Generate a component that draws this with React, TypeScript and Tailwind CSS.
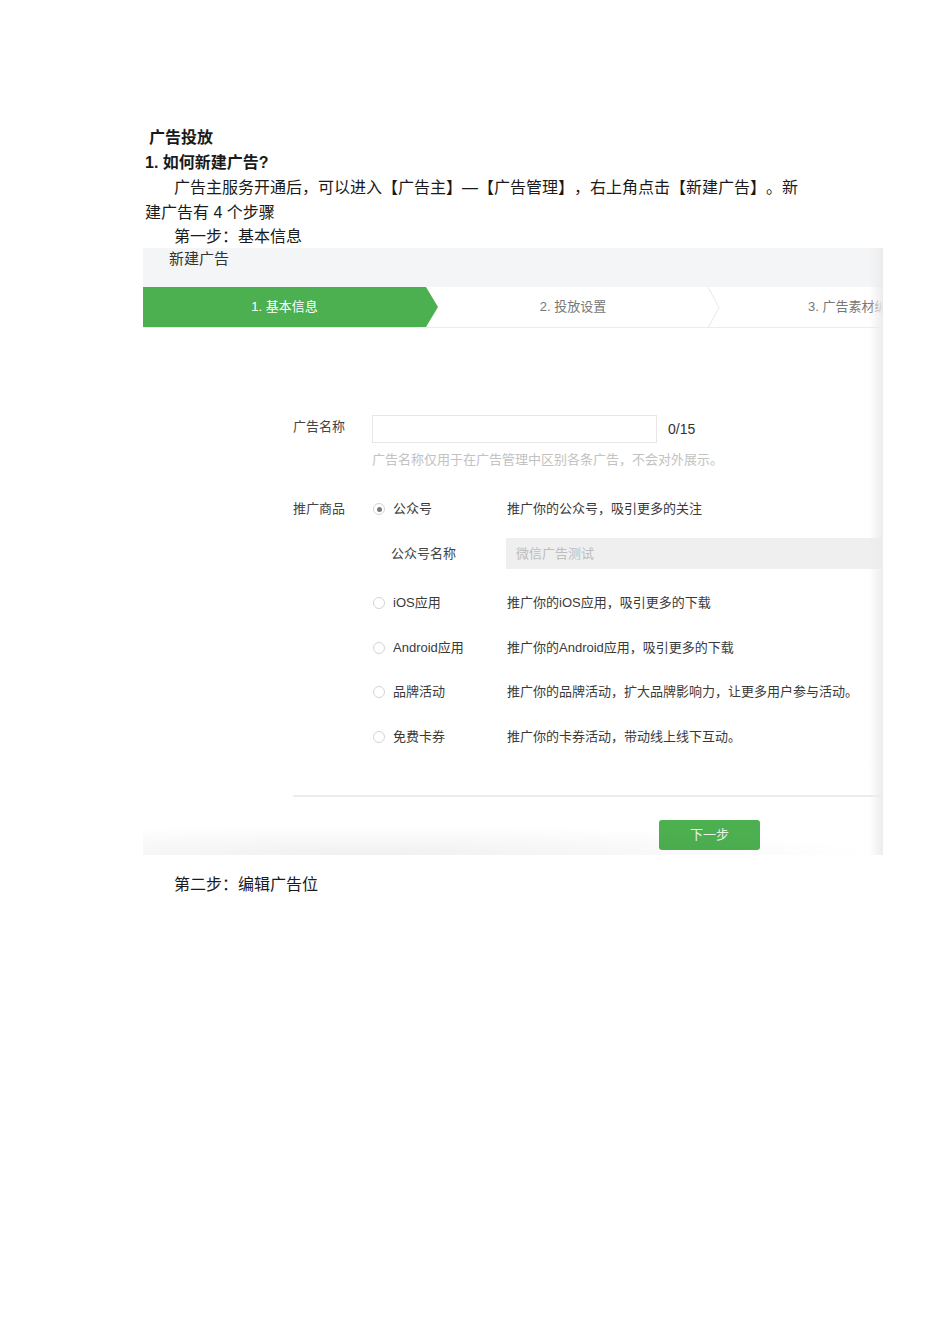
import React from "react";

const docFont = { fontFamily: '"Liberation Sans", "Noto Sans CJK SC", sans-serif' };

type Option = {
  label: string;
  desc: string;
  checked?: boolean;
};

const options: Option[] = [
  { label: "iOS应用", desc: "推广你的iOS应用，吸引更多的下载" },
  { label: "Android应用", desc: "推广你的Android应用，吸引更多的下载" },
  { label: "品牌活动", desc: "推广你的品牌活动，扩大品牌影响力，让更多用户参与活动。" },
  { label: "免费卡券", desc: "推广你的卡券活动，带动线上线下互动。" },
];

const Radio = ({ checked }: { checked?: boolean }) => (
  <span className="ml-[1px] flex h-[12px] w-[12px] shrink-0 items-center justify-center rounded-full border border-[#d4d4d4] bg-white">
    {checked && <span className="h-[5px] w-[5px] rounded-full bg-[#7a7a7a]" />}
  </span>
);

const OptionRow = ({ label, desc, checked, className }: Option & { className?: string }) => (
  <div className={`flex h-[20px] items-center ${className ?? ""}`}>
    <div className="flex w-[135px] items-center gap-[8px]">
      <Radio checked={checked} />
      <span className="text-[13px] text-[#3a3a3a]">{label}</span>
    </div>
    <span className="whitespace-nowrap text-[13px] text-[#3a3a3a]">{desc}</span>
  </div>
);

// 截图部分：新建广告表单
const Screenshot = () => (
  <div className="relative ml-[-2px] h-[607px] w-[740px] overflow-hidden bg-white">
    <div className="h-[39px] bg-[#f4f5f7] pl-[26px] pt-[1px] text-[15px] leading-[20px] text-[#333]">
      新建广告
    </div>

    {/* 步骤条 */}
    <div className="flex h-[41px] border-b border-[#ececec] text-[13px]">
      <div className="flex w-[295px] shrink-0 items-center justify-center bg-[#4caf50] pr-[12px] text-white [clip-path:polygon(0_0,calc(100%-12px)_0,100%_50%,calc(100%-12px)_100%,0_100%)]">
        1. 基本信息
      </div>
      <div className="relative flex w-[282px] shrink-0 items-center justify-center pr-[12px] text-[#777]">
        2. 投放设置
        <svg className="absolute right-0 top-0" width="12" height="41" viewBox="0 0 12 41">
          <polyline points="0,0 11,20.5 0,41" fill="none" stroke="#e8e8e8" strokeWidth="1" />
        </svg>
      </div>
      <div className="flex flex-1 items-center whitespace-nowrap pl-[88px] text-[#777]">3. 广告素材编辑</div>
    </div>

    {/* 表单 */}
    <div className="pl-[150px] pt-[87px]">
      <div className="flex">
        <div className="w-[79px] pt-[2px] text-[13px] leading-[20px] text-[#444]">广告名称</div>
        <div>
          <div className="flex items-center">
            <div className="h-[28px] w-[285px] border border-[#e6e6e6] bg-white" />
            <span className="ml-[11px] text-[14px] text-[#333]">0/15</span>
          </div>
          <div className="mt-[8px] text-[13px] leading-[18px] text-[#c2c2c2]">
            广告名称仅用于在广告管理中区别各条广告，不会对外展示。
          </div>
        </div>
      </div>

      <div className="mt-[30px] flex">
        <div className="w-[79px] text-[13px] leading-[20px] text-[#444]">推广商品</div>
        <div className="flex-1">
          <OptionRow label="公众号" desc="推广你的公众号，吸引更多的关注" checked />
          <div className="mt-[19px] flex h-[31px] items-center">
            <span className="w-[134px] pl-[19px] text-[13px] text-[#444]">公众号名称</span>
            <div className="flex h-full flex-1 items-center bg-[#efefef] pl-[10px] text-[13px] text-[#bdbdbd]">
              微信广告测试
            </div>
          </div>
          {options.map((o, i) => (
            <OptionRow key={o.label} {...o} className={i % 2 === 1 ? "mt-[25px]" : "mt-[24px]"} />
          ))}
        </div>
      </div>

      <div className="mt-[48px] h-[2px] bg-[#ececec]" />

      <div className="ml-[366px] mt-[23px] flex h-[30px] w-[101px] items-center justify-center rounded-[3px] bg-[#4caf50] text-[13px] text-[#e8f5e9]">
        下一步
      </div>
    </div>

    {/* 截图边缘阴影 */}
    <div className="pointer-events-none absolute bottom-0 right-0 top-0 w-[14px] bg-gradient-to-r from-transparent to-[#ececec]" />
    <div className="pointer-events-none absolute bottom-0 left-0 right-0 h-[30px] bg-[radial-gradient(ellipse_70%_100%_at_30%_100%,rgba(0,0,0,0.06),rgba(0,0,0,0))]" />
  </div>
);

export default function App() {
  return (
    <div
      className="min-h-[1344px] w-[950px] bg-white pl-[145px] pt-[125px] text-[#1a1a1a] [text-spacing-trim:space-all]"
      style={docFont}
    >
      <div className="w-[660px] text-[16px] leading-[25px]">
        <div className="pl-[4px] font-bold">广告投放</div>
        <div className="font-bold">1. 如何新建广告?</div>
        <p className="indent-[29px]">
          广告主服务开通后，可以进入【广告主】—【广告管理】，右上角点击【新建广告】。新建广告有 4 个步骤
        </p>
        <div className="pl-[29px] leading-[23px]">第一步：基本信息</div>
      </div>
      <Screenshot />
      <div className="mt-[17px] pl-[29px] text-[16px] leading-[25px]">第二步：编辑广告位</div>
    </div>
  );
}
